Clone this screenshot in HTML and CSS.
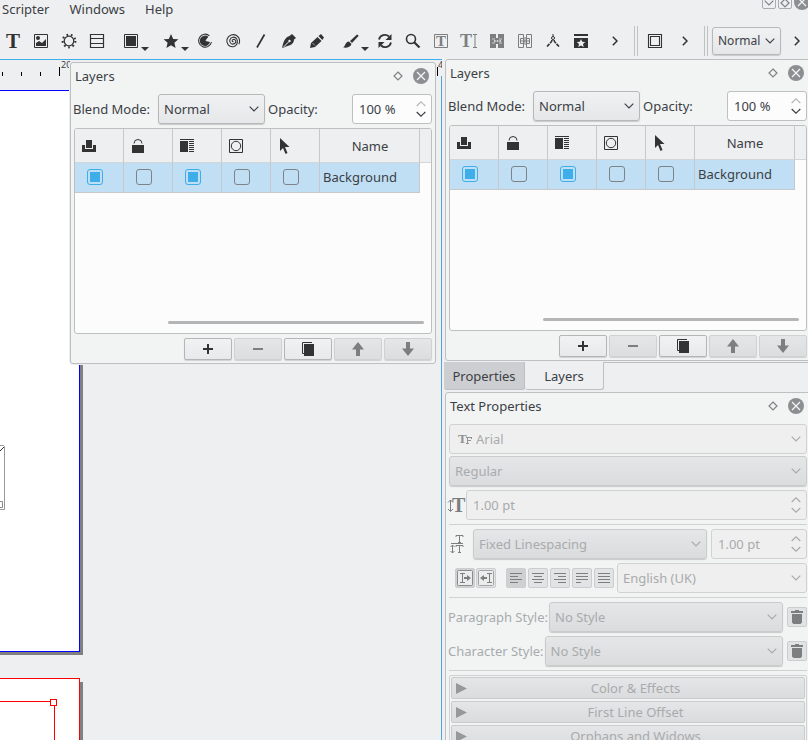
FILE: index.html
```html
<!DOCTYPE html>
<html lang="en">
<head>
<meta charset="utf-8">
<title>Layers</title>
<link rel="stylesheet" href="styles.css">
</head>
<body>
<svg class="defs" aria-hidden="true">
  <symbol id="down" viewBox="0 0 10 6"><path d="M.7.7 5 5 9.300.7" fill="none" stroke="currentColor" stroke-width="1.200"/></symbol>
  <symbol id="spin" viewBox="0 0 10 16"><path d="M.7 5 5 .9 9.300 5" fill="none" stroke="currentColor" stroke-width="1.200"/><path d="M.7 11 5 15.200 9.300 11" fill="none" stroke="currentColor" stroke-width="1.200"/></symbol>
  <symbol id="spin-max" viewBox="0 0 10 16"><path d="M.7 5 5 .9 9.300 5" fill="none" stroke="#b4b6b8" stroke-width="1.200"/><path d="M.7 11 5 15.200 9.300 11" fill="none" stroke="currentColor" stroke-width="1.200"/></symbol>
  <symbol id="right" viewBox="0 0 6 10"><path d="M.8.8 5 5 .8 9.200" fill="none" stroke="currentColor" stroke-width="1.500"/></symbol>
  <symbol id="diamond" viewBox="0 0 10 10"><path d="M5 1 9 5 5 9 1 5z" fill="none" stroke="#7f8385" stroke-width="1.200"/></symbol>
  <symbol id="close" viewBox="0 0 16 16"><circle cx="8" cy="8" r="8" fill="#8c8f92"/><path d="m4 4 8 8m0-8-8 8" stroke="#f4f5f5" stroke-width="1.200"/></symbol>
  <symbol id="printer" viewBox="0 0 14 14"><path d="M4 1h6v8H4zM0 6h3v4h8V6h3v7H0z"/></symbol>
  <symbol id="lock" viewBox="0 0 14 14"><path d="M1 6h12v8H1z"/><path d="M3 4.500a4 4 0 0 1 8 0" fill="none" stroke="currentColor"/></symbol>
  <symbol id="flow" viewBox="0 0 14 14"><path d="M0 0h14v1H0zM0 2h8v11H0zM9 2h5v1H9zM9 4h5v1H9zM9 6h5v1H9zM9 8h5v1H9zM9 10h5v1H9zM9 12h5v1H9z"/></symbol>
  <symbol id="outline" viewBox="0 0 14 14"><g fill="none" stroke="currentColor"><path d="M.5.5h13v13H.5z"/><circle cx="7" cy="7" r="4.700"/></g></symbol>
  <symbol id="cursor" viewBox="0 0 14 16"><path d="M2 0v13l3-3 2.500 6 2-1L7 9h4.500z"/></symbol>
  <symbol id="plus" viewBox="0 0 14 14"><path d="M2 6h4V2h2v4h4v2H8v4H6V8H2z"/></symbol>
  <symbol id="minus" viewBox="0 0 14 14"><path d="M2 6h10v2H2z"/></symbol>
  <symbol id="copy" viewBox="0 0 14 14"><path d="M3 2h10v12H3z"/><path d="M11 .5H1.500v11H3" fill="none" stroke="currentColor"/></symbol>
  <symbol id="up-arrow" viewBox="0 0 14 14"><path d="m7 0 6 7.500H9V14H5V7.500H1z"/></symbol>
  <symbol id="down-arrow" viewBox="0 0 14 14"><path d="m7 14 6-7.500H9V0H5v6.500H1z"/></symbol>
  <symbol id="trash" viewBox="0 0 12 14"><path d="M4 0h4v1h4v2H0V1h4zM1 4h10v8.500L9.500 14h-7L1 12.500z"/></symbol>
</svg>

<header>
  <nav class="menubar" aria-label="Menu">
    <a href="#">Scripter</a><a href="#">Windows</a><a href="#">Help</a>
    <div class="window-buttons">
      <button class="wb" aria-label="Minimize"><svg width="10" height="6"><use href="#down"/></svg></button>
      <button class="wb" aria-label="Restore"><svg width="10" height="10"><use href="#diamond"/></svg></button>
      <button class="bare" aria-label="Close window"><svg width="16" height="16"><use href="#close"/></svg></button>
    </div>
  </nav>
  <div class="toolbar">
    <button aria-label="Text frame"><svg viewBox="0 0 20 20"><text class="glyph" x="3" y="17" font-size="21">T</text></svg></button>
    <button aria-label="Image frame"><svg viewBox="0 0 20 20"><path d="M3.500 3.500h13v13h-13z" fill="none" stroke="currentColor"/><circle cx="7" cy="7" r="2"/><path d="M5 15v-3l3-2 3 2 4-4v7z"/></svg></button>
    <button aria-label="Render frame"><svg viewBox="0 0 20 20"><g fill="none" stroke="currentColor"><circle cx="10" cy="10" r="4.800" stroke-width="1.300"/><circle cx="10" cy="10" r="6.400" stroke-width="2" stroke-dasharray="1.700 2.770"/></g></svg></button>
    <button aria-label="Table"><svg viewBox="0 0 20 20"><path d="M3.500 3.500h13v13h-13zM3.500 7.500h13M3.500 12.500h13" fill="none" stroke="currentColor" stroke-width="1.200"/></svg></button>
    <button class="drop" aria-label="Shape"><svg viewBox="0 0 20 20"><path d="M3.500 3.500h13v13h-13z" fill="none" stroke="currentColor"/><path d="M5 5h10v10H5z"/></svg></button>
    <button class="drop" aria-label="Polygon"><svg viewBox="0 0 20 20"><path d="m10 3 2.200 4.900 5.200.4-4 3.500 1.200 5.200L10 14.200 5.400 17l1.200-5.200-4-3.500 5.200-.4z"/></svg></button>
    <button aria-label="Arc"><svg viewBox="0 0 20 20"><path d="M14.500 4.800A6.500 6.500 0 1 0 16.500 11" fill="none" stroke="currentColor" stroke-width="1.100"/><path d="M13.500 6A5.200 5.200 0 1 0 15 11l-4.500-1z"/><path d="m10.500 9.500 4-5 2 2.500z" fill="#eeeff1"/></svg></button>
    <button aria-label="Spiral"><svg viewBox="0 0 20 20"><path d="M10.500 10.500c-1.500.5-2-1.500-.3-2 2.300-.6 3.600 2.300 1.800 3.800-2.600 2-6 0-5.200-3.200C7.600 5.600 12 5.200 13.800 8c1.800 3.300 0 7-3.300 7.700C6 16.500 3 12.500 4 8.500 5.300 4 10.500 2.500 13.800 4.700c3 2 3.500 5.800 2 8.500" fill="none" stroke="currentColor" stroke-width="1.100"/></svg></button>
    <button aria-label="Line"><svg viewBox="0 0 20 20"><path d="M13.500 3.500 6 16.500" stroke="currentColor" stroke-width="1.700"/></svg></button>
    <button aria-label="Bezier curve"><svg viewBox="0 0 20 20"><path d="m13 3 4 4-2 1.500c0 4-3.500 6-8 7L4 17l-1-.5 1-3.500c1-4 3-7 6.500-8z"/><path d="m4 16.500 6-6" stroke="#eeeff1"/><circle cx="10.500" cy="10" r="1.200" fill="#eeeff1"/></svg></button>
    <button aria-label="Freehand line"><svg viewBox="0 0 20 20"><path d="m3 17 1-5 6.500-6 4 4-6.500 6zM11.500 5 14 3l3 3.500L15.300 9z"/><path d="m5.500 12 2.500 2.500" stroke="#eeeff1" stroke-width=".6"/></svg></button>
    <button class="drop" aria-label="Calligraphic line"><svg viewBox="0 0 20 20"><path d="M16 3.500q2 .5 1.500 1.500L11 12l-2-2zM8 10.500l2.500 2.500c-1 3.500-5 4-8.500 3.500 2.500-1 2-5.500 6-6z"/></svg></button>
    <button aria-label="Rotate"><svg viewBox="0 0 20 20"><path d="M4 8.500a6 6 0 0 1 10-3M16 11.500a6 6 0 0 1-10 3" fill="none" stroke="currentColor" stroke-width="1.800"/><path d="M16.500 3v6h-6zM3.500 17v-6h6z"/></svg></button>
    <button aria-label="Zoom"><svg viewBox="0 0 20 20"><g fill="none" stroke="currentColor"><circle cx="8" cy="8" r="4.500" stroke-width="1.600"/><path d="m11 11 5.500 5.500" stroke-width="2.200"/></g></svg></button>
    <button class="dim" aria-label="Edit contents"><svg viewBox="0 0 20 20"><path d="M3.500 3.500h13v13h-13z" fill="none" stroke="currentColor"/><text class="glyph" x="5" y="15" font-size="15">T</text></svg></button>
    <button class="dim" aria-label="Story editor"><svg viewBox="0 0 20 20"><text class="glyph" x="1" y="16" font-size="18">T</text><path d="M14 3.500h4M14 16.500h4M16 3.500v13" fill="none" stroke="currentColor"/></svg></button>
    <button class="dim" aria-label="Link frames"><svg viewBox="0 0 20 20"><path d="M3 3h6v4h2V3h6v14h-6v-4H9v4H3z"/><path d="M5 8h3m4 0h3M5 12h3m4 0h3" stroke="#eeeff1" stroke-width=".7"/><path d="M7 10h7" stroke="#eeeff1" stroke-width="1.600" stroke-dasharray="1.600 1.100"/></svg></button>
    <button class="dim" aria-label="Unlink frames"><svg viewBox="0 0 20 20"><path d="M3.500 3.500h5v13h-5zM11.500 3.500h5v13h-5zM5.500 7.500h3v5h-3zM11.500 7.500h3v5h-3zM5.500 10h9M10 6v8" fill="none" stroke="currentColor"/></svg></button>
    <button aria-label="Measure"><svg viewBox="0 0 20 20"><g fill="none" stroke="currentColor"><circle cx="10" cy="7" r="1.500"/><path d="M10 3v2.500"/><path d="M9 9c0 2-2 3-5 6.500M11 9c0 2 2 3 5 6.500" stroke-width="1.600" stroke-dasharray="4 1 6"/></g></svg></button>
    <button aria-label="Copy item properties"><svg viewBox="0 0 20 20"><path d="M3 3h14v2H3zM3 7h14v10H3z"/><path d="m10 8 1.200 2.700 3 .3-2.200 2 .7 3-2.700-1.600L7.300 16l.7-3-2.200-2 3-.3z" fill="#eeeff1"/></svg></button>
    <button class="more" aria-label="More tools"><svg class="chev" viewBox="0 0 6 10"><use href="#right"/></svg></button>
    <span class="divider"></span>
    <button class="after" aria-label="Push button"><svg viewBox="0 0 20 20"><path d="M3.500 3.500h13v13h-13zM5.500 5.500h9v9h-9z" fill="none" stroke="currentColor" stroke-width="1.100"/></svg></button>
    <button class="more-small" aria-label="More PDF tools"><svg class="chev" viewBox="0 0 6 10"><use href="#right"/></svg></button>
    <span class="divider"></span>
    <div class="combo quality"><select aria-label="Preview quality"><option>Normal</option></select><svg width="10" height="6"><use href="#down"/></svg></div>
    <button class="more-small" aria-label="More view tools"><svg class="chev" viewBox="0 0 6 10"><use href="#right"/></svg></button>
  </div>
</header>

<main>
  <section class="canvas" aria-label="Document">
    <div class="ruler">
      <i class="tick t1"></i><i class="tick t2"></i><i class="tick t3"></i>
      <i class="tick major m1"></i><span class="num n1">20</span>
      <i class="tick major m2"></i><span class="num n2">4</span>
    </div>
    <div class="viewport">
      <div class="page first"></div>
      <div class="page second"><div class="frame"></div></div>
      <svg class="scrap" viewBox="0 0 5 66"><path d="M0 .5h3.500l1 1v63H0" fill="#fff" stroke="#999"/><path d="m0 6 4-4" stroke="#333"/><path d="M0 56.500h2.500v6H0" fill="none" stroke="#888"/></svg>
    </div>

    <section class="panel floating">
      <div class="panel-title"><h2>Layers</h2><button class="bare" aria-label="Dock"><svg width="10" height="10"><use href="#diamond"/></svg></button><button class="bare" aria-label="Close"><svg width="16" height="16"><use href="#close"/></svg></button></div>
      <div class="blend">
        <label for="blend-a">Blend Mode:</label>
        <div class="combo mode"><select id="blend-a"><option>Normal</option></select><svg width="10" height="6"><use href="#down"/></svg></div>
        <label for="opacity-a">Opacity:</label>
        <div class="spin opacity"><input id="opacity-a" type="text" value="100 %"><svg width="10" height="16"><use href="#spin-max"/></svg></div>
      </div>
      <div class="layer-list">
        <table>
          <thead><tr>
            <th><svg class="hi"><use href="#printer"/></svg></th><th><svg class="hi"><use href="#lock"/></svg></th><th><svg class="hi"><use href="#flow"/></svg></th><th><svg class="hi"><use href="#outline"/></svg></th><th><svg class="hi"><use href="#cursor"/></svg></th><th class="name">Name</th><th class="rest"></th>
          </tr></thead>
          <tbody><tr>
            <td><input type="checkbox" aria-label="Print" checked></td><td><input type="checkbox" aria-label="Lock"></td><td><input type="checkbox" aria-label="Text flow" checked></td><td><input type="checkbox" aria-label="Outline"></td><td><input type="checkbox" aria-label="Select"></td><td class="name">Background</td><td class="rest"></td>
          </tr></tbody>
        </table>
        <div class="scrollbar"></div>
      </div>
      <div class="actions">
        <button aria-label="Add layer"><svg><use href="#plus"/></svg></button>
        <button aria-label="Delete layer" disabled><svg><use href="#minus"/></svg></button>
        <button aria-label="Duplicate layer"><svg><use href="#copy"/></svg></button>
        <button aria-label="Raise layer" disabled><svg><use href="#up-arrow"/></svg></button>
        <button aria-label="Lower layer" disabled><svg><use href="#down-arrow"/></svg></button>
      </div>
    </section>
  </section>

  <aside class="dock">
    <section class="panel">
      <div class="panel-title"><h2>Layers</h2><button class="bare" aria-label="Float"><svg width="10" height="10"><use href="#diamond"/></svg></button><button class="bare" aria-label="Close"><svg width="16" height="16"><use href="#close"/></svg></button></div>
      <div class="blend">
        <label for="blend-b">Blend Mode:</label>
        <div class="combo mode"><select id="blend-b"><option>Normal</option></select><svg width="10" height="6"><use href="#down"/></svg></div>
        <label for="opacity-b">Opacity:</label>
        <div class="spin opacity"><input id="opacity-b" type="text" value="100 %"><svg width="10" height="16"><use href="#spin-max"/></svg></div>
      </div>
      <div class="layer-list">
        <table>
          <thead><tr>
            <th><svg class="hi"><use href="#printer"/></svg></th><th><svg class="hi"><use href="#lock"/></svg></th><th><svg class="hi"><use href="#flow"/></svg></th><th><svg class="hi"><use href="#outline"/></svg></th><th><svg class="hi"><use href="#cursor"/></svg></th><th class="name">Name</th><th class="rest"></th>
          </tr></thead>
          <tbody><tr>
            <td><input type="checkbox" aria-label="Print" checked></td><td><input type="checkbox" aria-label="Lock"></td><td><input type="checkbox" aria-label="Text flow" checked></td><td><input type="checkbox" aria-label="Outline"></td><td><input type="checkbox" aria-label="Select"></td><td class="name">Background</td><td class="rest"></td>
          </tr></tbody>
        </table>
        <div class="scrollbar"></div>
      </div>
      <div class="actions">
        <button aria-label="Add layer"><svg><use href="#plus"/></svg></button>
        <button aria-label="Delete layer" disabled><svg><use href="#minus"/></svg></button>
        <button aria-label="Duplicate layer"><svg><use href="#copy"/></svg></button>
        <button aria-label="Raise layer" disabled><svg><use href="#up-arrow"/></svg></button>
        <button aria-label="Lower layer" disabled><svg><use href="#down-arrow"/></svg></button>
      </div>
    </section>

    <div class="tabs">
      <button class="tab-off">Properties</button><button class="tab-on">Layers</button><span class="tab-line"></span>
    </div>

    <section class="panel">
      <div class="panel-title"><h2>Text Properties</h2><button class="bare" aria-label="Float"><svg width="10" height="10"><use href="#diamond"/></svg></button><button class="bare" aria-label="Close"><svg width="16" height="16"><use href="#close"/></svg></button></div>
      <div class="fonts">
        <div class="combo editable family"><svg class="tf" viewBox="0 0 14 14"><text class="glyph" x="0" y="11" font-size="13">T</text><path d="M8 5.500h6M9.500 5.500v6M8 11.500h3M9.500 8.500h3.500M13.500 5v2" fill="none" stroke="currentColor"/></svg><select aria-label="Font family" disabled><option>Arial</option></select><svg width="10" height="6"><use href="#down"/></svg></div>
        <div class="combo"><select aria-label="Font style" disabled><option>Regular</option></select><svg width="10" height="6"><use href="#down"/></svg></div>
      </div>
      <div class="line">
        <svg class="size-icon" viewBox="0 0 17 16"><path d="M2.500 3v11M0 5.500l2.500-2.500L5 5.500M0 12l2.500 2.500L5 12" fill="none" stroke="currentColor"/><text class="glyph" x="4" y="15" font-size="20">T</text></svg>
        <div class="spin grow"><input type="text" aria-label="Font size" value="1.00 pt" disabled><svg width="10" height="16"><use href="#spin"/></svg></div>
      </div>
      <hr>
      <div class="line">
        <svg class="space-icon" viewBox="0 0 14 20"><path d="M6 3V1.500h7V3M9.500 1.500v7M8 8.500h3M1 9.500h12M2.500 11v8M.5 13l2-2 2 2M.5 17l2 2 2-2M6 13v-1.500h7V13M9.500 11.500v7M8 18.500h3" fill="none" stroke="currentColor"/></svg>
        <div class="combo grow"><select aria-label="Line spacing mode" disabled><option>Fixed Linespacing</option></select><svg width="10" height="6"><use href="#down"/></svg></div>
        <div class="spin leading"><input type="text" aria-label="Line spacing" value="1.00 pt" disabled><svg width="10" height="16"><use href="#spin"/></svg></div>
      </div>
      <div class="line">
        <div class="group direction">
          <button class="pressed" aria-label="Left to right" disabled><svg viewBox="0 0 18 18"><rect x="1.500" y="1.500" width="15" height="15" rx="1" fill="#ececed" stroke="#8a8c8e"/><path d="M4 4.500h5M4 13.500h5M6.500 4.500v9" fill="none" stroke="currentColor"/><path d="M8 8h3V6l4 3-4 3v-2H8z"/></svg></button>
          <button aria-label="Right to left" disabled><svg viewBox="0 0 18 18"><rect x="1.500" y="1.500" width="15" height="15" rx="1" fill="#ececed" stroke="#a2a4a6"/><path d="M10 4.500h5M10 13.500h5M12.500 4.500v9" fill="none" stroke="currentColor"/><path d="M10 8H7V6L3 9l4 3v-2h3z"/></svg></button>
        </div>
        <div class="group">
          <button class="pressed" aria-label="Align left" disabled><svg viewBox="0 0 18 18"><path d="M3 4.500h12M3 7.500h8M3 10.500h12M3 13.500h8" stroke="currentColor"/></svg></button>
          <button aria-label="Align center" disabled><svg viewBox="0 0 18 18"><path d="M3 4.500h12M5 7.500h8M3 10.500h12M5 13.500h8" stroke="currentColor"/></svg></button>
          <button aria-label="Align right" disabled><svg viewBox="0 0 18 18"><path d="M3 4.500h12M7 7.500h8M3 10.500h12M7 13.500h8" stroke="currentColor"/></svg></button>
          <button aria-label="Justify" disabled><svg viewBox="0 0 18 18"><path d="M3 4.500h12M3 7.500h12M3 10.500h12M3 13.500h5" stroke="currentColor"/></svg></button>
          <button aria-label="Force justify" disabled><svg viewBox="0 0 18 18"><path d="M3 4.500h12M3 7.500h12M3 10.500h12M3 13.500h12" stroke="currentColor"/></svg></button>
        </div>
        <div class="combo editable grow"><select aria-label="Language" disabled><option>English (UK)</option></select><svg width="10" height="6"><use href="#down"/></svg></div>
      </div>
      <hr>
      <div class="line style-line">
        <label for="pstyle">Paragraph Style:</label>
        <div class="combo grow"><select id="pstyle" disabled><option>No Style</option></select><svg width="10" height="6"><use href="#down"/></svg></div>
        <button class="clear" aria-label="Clear paragraph style" disabled><svg width="12" height="14"><use href="#trash"/></svg></button>
      </div>
      <div class="line style-line">
        <label for="cstyle">Character Style:</label>
        <div class="combo grow"><select id="cstyle" disabled><option>No Style</option></select><svg width="10" height="6"><use href="#down"/></svg></div>
        <button class="clear" aria-label="Clear character style" disabled><svg width="12" height="14"><use href="#trash"/></svg></button>
      </div>
      <hr>
      <div class="sections">
        <button disabled><svg viewBox="0 0 11 11"><path d="m0 0 11 5.500L0 11z"/></svg><span>Color &amp; Effects</span></button>
        <button disabled><svg viewBox="0 0 11 11"><path d="m0 0 11 5.500L0 11z"/></svg><span>First Line Offset</span></button>
        <button disabled><svg viewBox="0 0 11 11"><path d="m0 0 11 5.500L0 11z"/></svg><span>Orphans and Widows</span></button>
      </div>
    </section>
  </aside>
</main>
</body>
</html>
```
FILE: styles.css
```css
* { box-sizing: border-box; }

body {
  margin: 0;
  height: 100vh;
  overflow: hidden;
  display: flex;
  flex-direction: column;
  background: #eeeff1;
  color: #3b4045;
  font: 13px/18px "Noto Sans", sans-serif;
}

svg { display: block; flex: none; fill: currentColor; overflow: visible; }
.defs { position: absolute; width: 0; height: 0; }
.glyph { font-family: "Liberation Serif", serif; font-weight: bold; }

button, select, input { font: inherit; color: inherit; margin: 0; }
button { padding: 0; border: 0; background: none; display: flex; align-items: center; justify-content: center; }

/* menu bar */
.menubar { display: flex; gap: 20px; height: 20px; padding-left: 2px; overflow: hidden; }
.menubar a { color: inherit; text-decoration: none; }
.window-buttons { display: flex; gap: 2px; margin: -6px -2px 0 auto; align-items: flex-start; }
.wb { width: 14px; height: 15px; border: 1px solid #a9acae; border-radius: 2px; color: #7f8385; padding-top: 3px; }

/* tool bar */
.toolbar { display: flex; align-items: center; height: 39px; padding-top: 3px; margin-left: -1px; color: #333; }
.toolbar button { width: 28px; height: 30px; flex: none; }
.toolbar button svg { width: 20px; height: 20px; }
.toolbar .drop { width: 40px; position: relative; }
.drop::after { content: ""; position: absolute; right: 2px; bottom: 5px; border: 4px solid transparent; border-top-color: #333; border-bottom: 0; }
.toolbar .dim { color: #7c7e80; }
.toolbar .more { width: 39px; }
.toolbar .more-small { width: 32px; }
.toolbar button .chev { width: 6px; height: 10px; }
.toolbar .after { margin-left: 3px; }
.divider { width: 4px; height: 30px; flex: none; border: solid #bfc1c3; border-width: 0 1px; }
.more-small + .divider { margin-left: 3px; }
.toolbar .quality { flex: none; width: 69px; height: 28px; margin-left: 4px; font-size: 12px; color: #3b4045; }

/* fields */
.combo, .spin { display: grid; align-items: center; min-width: 0; }
.combo > *, .spin > * { grid-area: 1 / 1; }
.combo > svg, .spin > svg { justify-self: end; margin-right: 6px; pointer-events: none; }
.combo select {
  appearance: none;
  width: 100%;
  height: 30px;
  padding: 0 5px;
  border: 1px solid #b6b8ba;
  border-radius: 3px;
  box-shadow: 0 1px 1px #c8caca;
  background: linear-gradient(#f0f1f2, #e6e7e9);
  opacity: 1;
}
.quality select { height: 28px; }
.combo select:disabled { background: linear-gradient(#e5e6e8, #dbdcde); border-color: #cacccc; color: #a8abad; }
.combo.editable select { background: #efefef; border-color: #d0d2d2; box-shadow: none; }
.combo:has(:disabled), .spin:has(:disabled) { color: #a8abad; }
.spin input { width: 100%; height: 30px; padding: 0 6px; border: 1px solid #bdbfc0; border-radius: 3px; background: #fcfcfc; }
.spin input:disabled { background: #efefef; border-color: #d0d2d2; color: #a8abad; }
.combo.family select { padding-left: 26px; }
.combo > .tf { justify-self: start; margin-left: 9px; width: 14px; height: 14px; color: #909294; z-index: 1; }
.grow { flex: 1; }

main { flex: 1; min-height: 0; display: grid; grid-template-columns: minmax(0, 1fr) 366px; }

/* document */
.canvas { position: relative; display: flex; flex-direction: column; border-top: 1px solid #3daee9; min-height: 0; }
.ruler { position: relative; height: 16px; overflow: hidden; }
.tick { position: absolute; top: 12px; width: 1px; height: 4px; background: #000; }
.major { top: 7px; height: 9px; }
.t1 { left: 2px; } .t2 { left: 21px; } .t3 { left: 40px; } .m1 { left: 59px; } .m2 { left: 437px; }
.num { position: absolute; top: 0; font-size: 9px; line-height: 10px; }
.n1 { left: 61px; } .n2 { left: 438px; }
.viewport { position: relative; flex: 1; overflow: hidden; border-right: 1px solid #4fa6d8; }
.page { position: absolute; left: -10px; width: 90px; background: #fff; border: 1px solid; box-shadow: 3px 3px #808080; }
.first { top: 14px; height: 562px; border-color: #00f; }
.second { top: 602px; height: 300px; border-color: #f00; box-shadow: 3px 4px #808080; }
.frame { position: absolute; left: -10px; top: 22px; width: 74px; height: 300px; border: 1px solid #f00; }
.frame::after { content: ""; position: absolute; right: -3px; top: -3px; width: 5px; height: 5px; border: 1px solid #f00; background: #fff; }
.scrap { position: absolute; left: 0; top: 369px; width: 5px; height: 66px; }

/* panels */
.panel { display: flex; flex-direction: column; padding: 0 3px 3px; border: 1px solid #bdbfc0; border-radius: 3px; background: #f2f4f4; }
.floating { position: absolute; left: 70px; top: 2px; width: 366px; box-shadow: 0 0 0 1px #ebedee; }
.panel-title { display: flex; align-items: center; height: 27px; margin-bottom: 4px; padding: 0 3px 2px 1px; }
.panel-title h2 { margin: 0 auto 0 0; font: inherit; }
.panel-title .bare:last-child { margin-left: 10px; }

.blend { display: flex; align-items: center; margin: 0 0 4px -1px; }
.blend label:first-child { flex: 0 0 85px; }
.mode { width: 107px; margin-right: 3px; }
.opacity { width: 80px; margin-left: auto; }

.layer-list { display: flex; flex-direction: column; justify-content: space-between; height: 206px; border: 1px solid #bdbfc0; border-radius: 3px; background: #fcfcfc; overflow: hidden; }
table { width: 100%; table-layout: fixed; border-collapse: separate; border-spacing: 0; }
th, td { padding: 0; border: solid #c6c8ca; border-width: 0 1px 1px 0; }
th { width: 49px; height: 34px; padding-left: 7px; background: #eeeff1; font-weight: normal; border-bottom-color: #d3d5d6; }
td { height: 30px; padding: 0 0 2px 12px; background: #c1dff4; }
th.name { width: 100px; padding: 0 0 0 1px; text-align: center; }
td.name { padding-left: 3px; }
th.rest { width: auto; border-right: 0; }
td.rest { background: none; border: 0; }
.hi { width: 14px; height: 16px; color: #333; }
input[type="checkbox"] { appearance: none; display: block; width: 16px; height: 16px; border: 1px solid #7d8388; border-radius: 3px; }
input[type="checkbox"]:checked { border-color: #3daee9; background: #3daee9 content-box; padding: 2px; }
.scrollbar { width: 256px; height: 3px; margin: 0 7px 9px auto; border-radius: 2px; background: #b4b5b6; }

.actions { display: flex; justify-content: flex-end; gap: 2px; margin-top: 4px; color: #333; }
.actions button { width: 48px; height: 22px; border: 1px solid #b3b5b7; border-radius: 2px; box-shadow: 0 1px 1px #cfd1d1; background: linear-gradient(#f1f2f3, #e8e9eb); }
.actions button:disabled { color: #7c7e80; border-color: #cfd1d2; background: linear-gradient(#e5e6e8, #dcdddf); }
.actions svg { width: 14px; height: 14px; }

/* dock */
.dock { padding-left: 3px; overflow: hidden; display: flex; flex-direction: column; }
.dock .panel { margin-right: -3px; flex: none; }
.tabs { display: flex; height: 28px; margin: 1px 0 2px -1px; flex: none; }
.tabs button { border: solid #bdbfc0; border-width: 0 1px 1px 0; border-radius: 0 0 3px 3px; }
.tab-off { width: 81px; background: #cdced1; }
.tab-on { width: 79px; }
.tab-line { flex: 1; border-top: 1px solid #bdbfc0; }

.fonts { display: grid; gap: 2px; }
hr { width: 100%; height: 1px; margin: 4px 0 0; border: 0; background: #cfd1d2; }
.line { display: flex; align-items: center; margin-top: 4px; color: #7c7e80; }
.size-icon { width: 17px; height: 16px; margin: 0 1px 0 -1px; }
.space-icon { width: 14px; height: 20px; margin: 0 9px 0 1px; }
.leading { width: 96px; margin-left: 4px; }
.group { display: flex; gap: 2px; margin-right: 3px; }
.group.direction { margin: 0 10px 0 6px; gap: 1px; }
.group button { width: 20px; height: 20px; border: 1px solid #cbcdce; border-radius: 2px; background: #e2e3e5; color: #7c7e80; }
.group .pressed { background: #cfd0d2; }
.group svg { width: 18px; height: 18px; }
.style-line { color: #a8abad; }
.style-line label { margin: 0 1px 0 -1px; }
.clear { width: 20px; height: 20px; margin-left: 4px; border: 1px solid #cbcdce; border-radius: 2px; background: #e2e3e5; color: #7c7e80; }
.sections { display: grid; gap: 2px; margin-top: 4px; padding: 1px; border: 1px solid #cfd1d2; border-radius: 2px; }
.sections button { height: 22px; border: 1px solid #cacccc; border-radius: 2px; background: linear-gradient(#e5e6e8, #dbdcde); color: #a8abad; }
.sections svg { width: 11px; height: 11px; margin-left: 4px; color: #96989a; }
.sections span { flex: 1; }
```
